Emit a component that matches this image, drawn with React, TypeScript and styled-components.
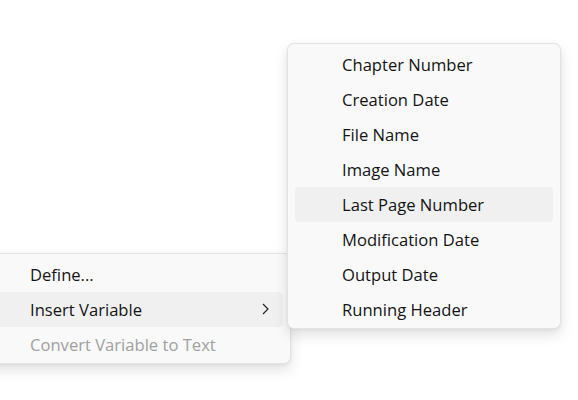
import styled, { createGlobalStyle } from 'styled-components'

const GlobalStyle = createGlobalStyle`
  html, body {
    margin: 0;
    padding: 0;
    background: #ffffff;
  }
  body {
    font-family: "Open Sans", "Noto Sans", sans-serif;
  }
`

//* The canvas the menus float on
const Stage = styled.div`
  position: relative;
  width: 578px;
  height: 400px;
  overflow: hidden;
  background: #ffffff;
`

const MenuPanel = styled.ul<{ $left: number; $top: number; $width: number }>`
  position: absolute;
  left: ${p => p.$left}px;
  top: ${p => p.$top}px;
  width: ${p => p.$width}px;
  margin: 0;
  padding: 3px 0 1px;
  list-style: none;
  box-sizing: border-box;
  background: #f9f9f9;
  border: 1px solid #e3e3e3;
  border-radius: 7px;
  box-shadow: 0 6px 14px rgba(0, 0, 0, 0.12), 0 1px 3px rgba(0, 0, 0, 0.06);
`

const MenuItem = styled.li<{ $hover?: boolean; $disabled?: boolean; $indent: number }>`
  display: flex;
  align-items: center;
  justify-content: space-between;
  height: 35px;
  margin: 0 7px;
  padding: 0 14px 1px ${p => p.$indent}px;
  box-sizing: border-box;
  border-radius: 4px;
  font-size: 16.6px;
  color: ${p => (p.$disabled ? '#a0a0a0' : '#141414')};
  background: ${p => (p.$hover ? '#f0f0f0' : 'transparent')};
  white-space: nowrap;
`

const Chevron = () => (
  <svg width="7" height="12" viewBox="0 0 7 12" fill="none">
    <path d="M1 1l5 5-5 5" stroke="#1b1b1b" strokeWidth="1.1" />
  </svg>
)

const variables = [
  'Chapter Number',
  'Creation Date',
  'File Name',
  'Image Name',
  'Last Page Number',
  'Modification Date',
  'Output Date',
  'Running Header',
]

const App = () => {
  return (
    <>
      <GlobalStyle />
      <Stage>
        <MenuPanel $left={-20} $top={253} $width={311}>
          <MenuItem $indent={42}>Define...</MenuItem>
          <MenuItem $indent={42} $hover>
            Insert Variable
            <Chevron />
          </MenuItem>
          <MenuItem $indent={42} $disabled>Convert Variable to Text</MenuItem>
        </MenuPanel>
        <MenuPanel $left={287} $top={43} $width={274}>
          {variables.map(v => (
            <MenuItem key={v} $indent={47} $hover={v === 'Last Page Number'}>
              {v}
            </MenuItem>
          ))}
        </MenuPanel>
      </Stage>
    </>
  )
}

export default App
